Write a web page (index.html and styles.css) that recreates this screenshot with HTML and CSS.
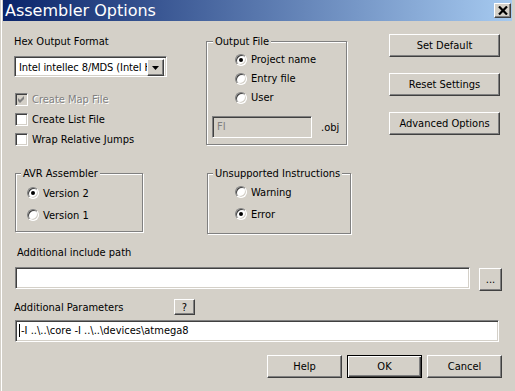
FILE: index.html
```html
<!doctype html>
<html lang="en">
 <head>
  <meta charset="utf-8">
  <title>Assembler Options</title>
  <link rel="stylesheet" href="styles.css">
 </head>
 <body>
  <div class="window">
   <div class="titlebar">
    <span class="title">Assembler Options</span>
    <span class="close raised"><svg width="10" height="9" viewBox="0 0 10 9"><path d="M1 0.5L9 8.5M9 0.5L1 8.5" stroke="#000" stroke-width="2.2"/></svg></span>
   </div>

   <div class="content">
    <div class="top">
     <!-- left column: hex format + check boxes -->
     <div class="col-format">
      <div class="label">Hex Output Format</div>
      <div class="combo sunken">
       <span class="combo-text">Intel intellec 8/MDS (Intel Hex)</span>
       <span class="combo-btn raised"><svg width="7" height="4" viewBox="0 0 7 4"><path d="M0 0h7L3.5 4z"/></svg></span>
      </div>
      <div class="checks">
       <div class="check-row disabled">
        <span class="check sunken"><svg width="7" height="7" viewBox="0 0 7 7"><path d="M0 2l2 2 4-4v3l-4 4-2-2z"/></svg></span>
        <span>Create Map File</span>
       </div>
       <div class="check-row">
        <span class="check sunken"></span>
        <span>Create List File</span>
       </div>
       <div class="check-row">
        <span class="check sunken"></span>
        <span>Wrap Relative Jumps</span>
       </div>
      </div>
     </div>

     <div class="group group-output">
      <span class="caption">Output File</span>
      <div class="radios">
       <div class="radio-row"><span class="radio on"></span>Project name</div>
       <div class="radio-row"><span class="radio"></span>Entry file</div>
       <div class="radio-row"><span class="radio"></span>User</div>
      </div>
      <div class="file-row">
       <span class="field sunken disabled">FI</span>
       <span>.obj</span>
      </div>
     </div>

     <div class="side-buttons">
      <button class="btn raised">Set Default</button>
      <button class="btn raised">Reset Settings</button>
      <button class="btn raised">Advanced Options</button>
     </div>

     <div class="group group-avr">
      <span class="caption">AVR Assembler</span>
      <div class="radios">
       <div class="radio-row"><span class="radio on"></span>Version 2</div>
       <div class="radio-row"><span class="radio"></span>Version 1</div>
      </div>
     </div>

     <div class="group group-unsupported">
      <span class="caption">Unsupported Instructions</span>
      <div class="radios">
       <div class="radio-row"><span class="radio"></span>Warning</div>
       <div class="radio-row"><span class="radio on"></span>Error</div>
      </div>
     </div>
    </div>

    <div class="label label-include">Additional include path</div>
    <div class="include-row">
     <span class="field sunken include-field"></span>
     <button class="btn raised browse">...</button>
    </div>

    <div class="params-head">
     <span class="params-label">Additional Parameters</span>
     <button class="btn raised help-q">?</button>
    </div>
    <div class="field sunken params-field"><span class="caret"></span>-I ..\..\core -I ..\..\devices\atmega8</div>

    <div class="bottom-buttons">
     <button class="btn raised">Help</button>
     <button class="btn default">OK</button>
     <button class="btn raised">Cancel</button>
    </div>
   </div>
  </div>
 </body>
</html>
```
FILE: styles.css
```css
body {
	margin: 0;
	background: #d4d0c8;
	font-family: "DejaVu Sans Condensed", "Liberation Sans", sans-serif;
	font-size: 11px;
	line-height: 13px;
	color: #000;
}

.window {
	width: 515px;
	height: 391px;
	overflow: hidden;
	box-sizing: border-box;
	padding: 0 3px;
	background: linear-gradient(to right, #d4d0c8 1px, #fff 1px 2px, #d4d0c8 2px);
}

/* title bar */
.titlebar {
	display: flex;
	align-items: center;
	justify-content: space-between;
	height: 21px;
	padding: 0 1px 0 2px;
	background: linear-gradient(to right, #0a246a, #a6caf0);
}

.title {
	color: #fff;
	font-family: "DejaVu Sans", Verdana, sans-serif;
	font-size: 16px;
	line-height: 21px;
}

.close {
	display: flex;
	align-items: center;
	justify-content: center;
	width: 17px;
	height: 15px;
	box-sizing: border-box;
	background: #d4d0c8;
}

/* classic 3d edges */
.raised {
	border: 1px solid;
	border-color: #fff #404040 #404040 #fff;
	box-shadow: inset -1px -1px #808080;
}

.sunken {
	border: 1px solid;
	border-color: #808080 #fff #fff #808080;
	box-shadow: inset 1px 1px #404040, inset -1px -1px #d4d0c8;
}

.content {
	width: 488px;
	margin-left: 11px;
}

.top {
	display: grid;
	grid-template-columns: 192px 183px 113px;
	grid-template-rows: 139px 74px;
	align-items: start;
}

.col-format {
	padding-top: 14px;
}

.combo {
	display: flex;
	box-sizing: border-box;
	width: 153px;
	height: 21px;
	margin-top: 8px;
	padding: 2px;
	background: #fff;
}

.combo-text {
	flex: 1;
	overflow: hidden;
	white-space: nowrap;
	padding-left: 2px;
	line-height: 17px;
	letter-spacing: -0.1px;
}

.combo-btn {
	display: flex;
	align-items: center;
	justify-content: center;
	width: 17px;
	height: 17px;
	box-sizing: border-box;
	background: #d4d0c8;
}

.checks {
	margin-top: 12px;
}

.check-row {
	display: flex;
	align-items: center;
	gap: 4px;
	height: 20px;
	padding-left: 1px;
}

.check {
	display: flex;
	align-items: center;
	justify-content: center;
	width: 13px;
	height: 13px;
	box-sizing: border-box;
	background: #fff;
}

.disabled {
	color: #808080;
	text-shadow: 1px 1px #fff;
}

.check-row.disabled .check {
	background: #d4d0c8;
}

.check svg {
	fill: #808080;
}

/* group boxes */
.group {
	position: relative;
	box-sizing: border-box;
	border: 1px solid #808080;
	box-shadow: 1px 1px #fff, inset 1px 1px #fff;
}

.caption {
	position: absolute;
	top: -7px;
	left: 5px;
	padding: 0 2px;
	background: #d4d0c8;
	white-space: nowrap;
}

.group-output {
	width: 141px;
	height: 104px;
	margin-top: 20px;
}

.group-output .caption {
	left: 6px;
}

.group-output .radios {
	margin-top: 8px;
	padding-left: 28px;
}

.group-output .radio-row {
	height: 19px;
}

.radio-row {
	display: flex;
	align-items: center;
	gap: 4px;
	height: 22px;
}

.radio {
	display: flex;
	align-items: center;
	justify-content: center;
	width: 12px;
	height: 12px;
	box-sizing: border-box;
	border-radius: 50%;
	background: #fff;
	border: 1px solid;
	border-color: #808080 #fff #fff #808080;
	box-shadow: inset 1px 1px #404040, inset -1px -1px #d4d0c8;
}

.radio.on::after {
	content: "";
	width: 4px;
	height: 4px;
	border-radius: 50%;
	background: #000;
}

.file-row {
	display: flex;
	align-items: center;
	gap: 9px;
	margin-top: 9px;
	padding-left: 5px;
}

.field {
	display: block;
	box-sizing: border-box;
	height: 22px;
	padding-left: 4px;
	line-height: 20px;
	background: #fff;
	white-space: nowrap;
}

.field.disabled {
	width: 100px;
	background: #d4d0c8;
	text-shadow: none;
}

.side-buttons {
	display: flex;
	flex-direction: column;
	gap: 16px;
	padding-top: 13px;
}

.btn {
	box-sizing: border-box;
	height: 23px;
	padding: 0;
	background: #d4d0c8;
	font: inherit;
	color: #000;
}

.side-buttons .btn {
	width: 111px;
}

.group-avr {
	width: 128px;
	height: 59px;
	margin: 13px 0 0 1px;
}

.group-avr .radios {
	margin-top: 8px;
	padding-left: 11px;
}

.group-unsupported {
	width: 144px;
	height: 61px;
	margin: 13px 0 0 1px;
}

.group-unsupported .radios {
	margin-top: 7px;
	padding-left: 27px;
}

/* lower part */
.label-include {
	margin: 12px 0 0 3px;
}

.include-row {
	display: flex;
	justify-content: space-between;
	align-items: flex-start;
	height: 24px;
	margin-top: 8px;
	padding-left: 1px;
}

.include-field {
	width: 455px;
}

.browse {
	width: 23px;
	margin-top: 1px;
	line-height: 17px;
}

.params-head {
	display: flex;
	align-items: center;
	height: 16px;
	margin-top: 8px;
}

.params-label {
	width: 160px;
}

.help-q {
	width: 21px;
	height: 16px;
}

.params-field {
	width: 484px;
	margin: 5px 0 0 1px;
	padding-left: 3px;
}

.caret {
	display: inline-block;
	width: 1px;
	height: 13px;
	margin-right: 1px;
	vertical-align: -3px;
	background: #000;
}

.bottom-buttons {
	display: flex;
	justify-content: flex-end;
	gap: 5px;
	margin-top: 13px;
}

.bottom-buttons .btn {
	width: 75px;
}

.btn.default {
	border: 1px solid #000;
	box-shadow: inset 1px 1px #fff, inset -1px -1px #404040, inset -2px -2px #808080;
}
```
